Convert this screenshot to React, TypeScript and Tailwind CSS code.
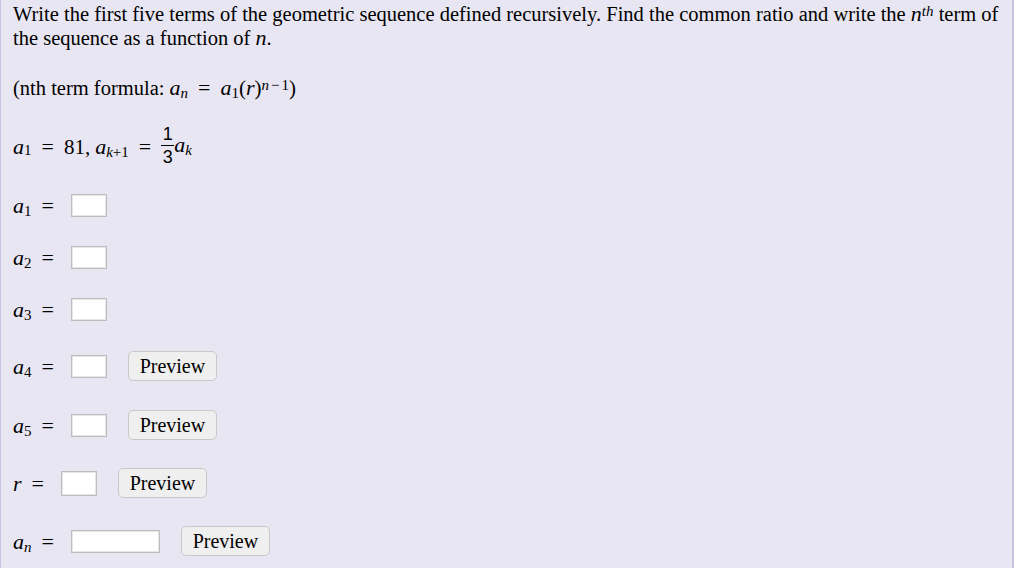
import type { ReactNode } from "react";

const V = ({ children }: { children: ReactNode }) => (
  <i className="font-['Liberation_Serif'] text-[22px]">{children}</i>
);

const Sub = ({ children }: { children: ReactNode }) => (
  <sub className="font-['Liberation_Serif'] text-[15px] not-italic relative top-[3px]">{children}</sub>
);

const Eq = () => <span className="font-['Liberation_Serif'] mx-[10px] text-[22px]">=</span>;

const Box = ({ w = "w-[36px]", h = "h-[23px]" }: { w?: string; h?: string }) => (
  <input
    type="text"
    className={`${w} ${h} bg-white border border-[#bdbdbd] shadow-[inset_0_0_0_1px_#e6e6e6] outline-none`}
  />
);

const PreviewBtn = () => (
  <button className="ml-[21px] h-[30px] w-[89px] rounded-[5px] border border-[#c9c9c9] bg-[#efefef] text-[20px] leading-none text-black font-['Liberation_Serif']">
    Preview
  </button>
);

function Row({
  label,
  box,
  preview,
  className = "",
}: {
  label: ReactNode;
  box: ReactNode;
  preview?: boolean;
  className?: string;
}) {
  return (
    <div className={`flex items-center ${className}`}>
      <span className="flex items-baseline whitespace-nowrap leading-[23px]">{label}</span>
      <span className="ml-[7px] flex">{box}</span>
      {preview && <PreviewBtn />}
    </div>
  );
}

export default function App() {
  return (
    <div className="flex min-h-[568px] bg-white">
      <div className="w-[1014px] h-[568px] bg-[#e8e6f2] border-l border-r-2 border-[#c6c5e1] pl-[12px] pt-[2px] font-['Liberation_Serif'] text-[20.5px] leading-[24px] text-black overflow-hidden">
        <p className="pr-[4px]">
          Write the first five terms of the geometric sequence defined recursively. Find the common ratio and write the{" "}
          <V>n</V>
          <sup className="text-[15px] italic relative -top-[5px]">th</sup> term of the sequence as a function of <V>n</V>.
        </p>

        <p className="mt-[26px]">
          (nth term formula: <V>a</V>
          <Sub>
            <i>n</i>
          </Sub>
          <Eq />
          <V>a</V>
          <Sub>1</Sub>
          <span className="text-[21px]">(</span>
          <V>r</V>
          <span className="text-[21px]">)</span>
          <sup className="text-[15px] relative -top-[5px]">
            <i>n</i>
            <span className="mx-[2px]">−</span>1
          </sup>
          <span className="text-[21px]">)</span>
        </p>

        <div className="mt-[27px] flex items-center h-[40px]">
          <V>a</V>
          <Sub>1</Sub>
          <Eq />
          <span className="text-[21px]">81,</span>
          <span className="ml-[5px]">
            <V>a</V>
            <Sub>
              <i>k</i>+1
            </Sub>
          </span>
          <Eq />
          <span className="inline-flex flex-col items-center font-['Liberation_Sans'] text-[18px] leading-[18px] relative top-[-2px]">
            <span>1</span>
            <span className="w-[13px] border-t border-black my-[2px]" />
            <span>3</span>
          </span>
          <span className="relative top-[-2px]">
            <V>a</V>
            <Sub>
              <i>k</i>
            </Sub>
          </span>
        </div>

        <div className="mt-[27px] flex flex-col">
          <Row
            label={
              <>
                <V>a</V>
                <Sub>1</Sub>
                <Eq />
              </>
            }
            box={<Box />}
          />
          <Row
            className="mt-[29px]"
            label={
              <>
                <V>a</V>
                <Sub>2</Sub>
                <Eq />
              </>
            }
            box={<Box />}
          />
          <Row
            className="mt-[29px]"
            label={
              <>
                <V>a</V>
                <Sub>3</Sub>
                <Eq />
              </>
            }
            box={<Box />}
          />
          <Row
            className="mt-[30px]"
            label={
              <>
                <V>a</V>
                <Sub>4</Sub>
                <Eq />
              </>
            }
            box={<Box />}
            preview
          />
          <Row
            className="mt-[29px]"
            label={
              <>
                <V>a</V>
                <Sub>5</Sub>
                <Eq />
              </>
            }
            box={<Box />}
            preview
          />
          <Row
            className="mt-[28px]"
            label={
              <>
                <V>r</V>
                <Eq />
              </>
            }
            box={<Box h="h-[25px]" />}
            preview
          />
          <Row
            className="mt-[28px]"
            label={
              <>
                <V>a</V>
                <Sub>
                  <i>n</i>
                </Sub>
                <Eq />
              </>
            }
            box={<Box w="w-[89px]" />}
            preview
          />
        </div>
      </div>
    </div>
  );
}
